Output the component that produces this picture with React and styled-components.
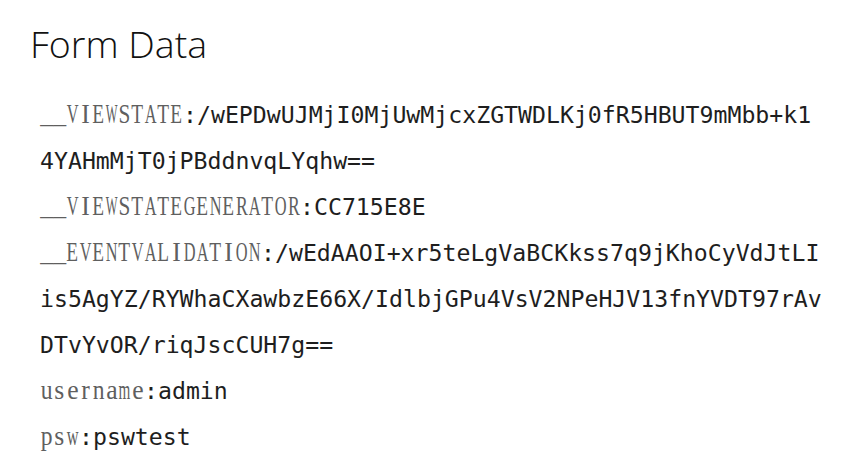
import React from 'react';
import styled, { createGlobalStyle } from 'styled-components';

const GlobalStyles = createGlobalStyle`
  html, body {
    margin: 0;
    padding: 0;
    background: #ffffff;
  }
`;

const Page = styled.div`
  padding: 20px 0 0 30px;
`;

const Title = styled.h2`
  margin: 0;
  font-family: "Open Sans", "Noto Sans", sans-serif;
  font-weight: 300;
  font-size: 37.5px;
  line-height: 48px;
  color: #111111;
`;

const FieldList = styled.div`
  margin-top: 24px;
  padding-left: 10px;
  width: 784px;
`;

const Field = styled.div`
  font-family: "DejaVu Sans Mono", "Liberation Mono", monospace;
  font-size: 23.2px;
  line-height: 46px;
  color: #1e1e1e;
  word-break: break-all;
`;

/* chaque caractere de la cle occupe une cellule fixe, comme une police serif a chasse fixe */
const KeyChar = styled.span`
  display: inline-flex;
  justify-content: center;
  width: 13px;
  font-family: "Liberation Serif", "DejaVu Serif", serif;
  font-size: 27px;
  line-height: 20px;
  color: #5f5f5f;
`;

const Glyph = styled.span`
  display: inline-block;
  transform: scaleX(${(p) => p.$scale});
`;

const Sep = styled.span`
  color: #1e1e1e;
`;

// largeurs Times (em) des lettres utilisees, pour les serrer dans la cellule
const widths = {
  A: 0.722, C: 0.667, D: 0.722, E: 0.611, G: 0.722, I: 0.333, L: 0.611,
  N: 0.722, O: 0.722, R: 0.667, S: 0.556, T: 0.611, V: 0.722, W: 0.944,
  a: 0.444, e: 0.444, m: 0.778, n: 0.5, p: 0.5, r: 0.333, s: 0.389,
  u: 0.5, w: 0.722, _: 0.5,
};

const scaleFor = (ch) => {
  const w = (widths[ch] || 0.5) * 27;
  if (ch === '_') return 12.9 / w;
  return Math.min(0.95, 11.8 / w);
};

const Key = ({ text }) => (
  <>
    {text.split('').map((ch, i) => (
      <KeyChar key={i}>
        <Glyph $scale={scaleFor(ch)}>{ch}</Glyph>
      </KeyChar>
    ))}
  </>
);

const fields = [
  ['__VIEWSTATE', '/wEPDwUJMjI0MjUwMjcxZGTWDLKj0fR5HBUT9mMbb+k14YAHmMjT0jPBddnvqLYqhw=='],
  ['__VIEWSTATEGENERATOR', 'CC715E8E'],
  ['__EVENTVALIDATION', '/wEdAAOI+xr5teLgVaBCKkss7q9jKhoCyVdJtLIis5AgYZ/RYWhaCXawbzE66X/IdlbjGPu4VsV2NPeHJV13fnYVDT97rAvDTvYvOR/riqJscCUH7g=='],
  ['username', 'admin'],
  ['psw', 'pswtest'],
];

export default function App() {
  return (
    <>
      <GlobalStyles />
      <Page>
        <Title>Form Data</Title>
        <FieldList>
          {fields.map(([k, v]) => (
            <Field key={k}>
              <Key text={k} />
              <Sep>:</Sep>
              {v}
            </Field>
          ))}
        </FieldList>
      </Page>
    </>
  );
}
